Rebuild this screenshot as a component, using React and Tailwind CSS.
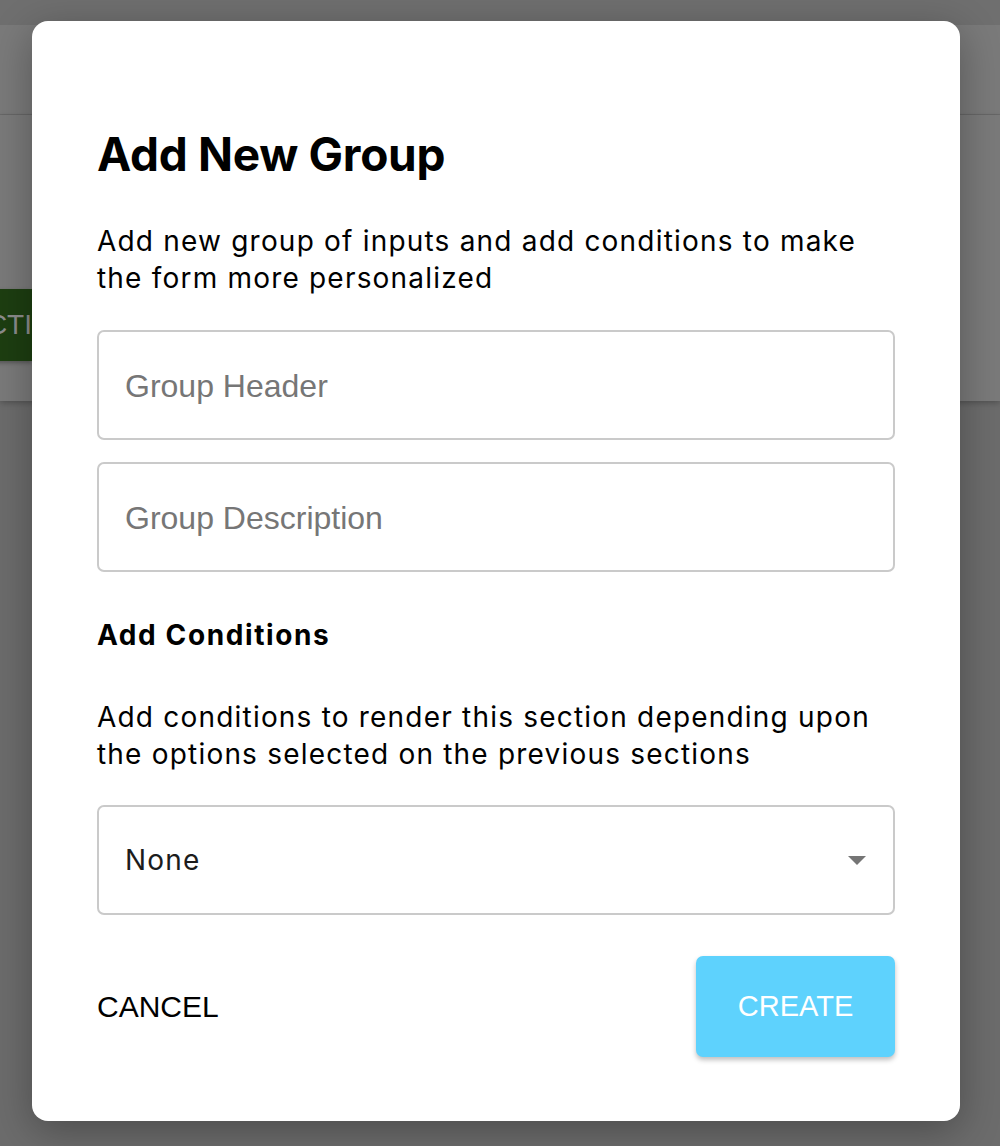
const FIELDS = ["Group Header", "Group Description"];

export default function App() {
  return (
    <div className="relative w-[1000px] h-[1146px] overflow-hidden bg-[#6c6c6c]">
      {/* page behind the dialog, already dimmed */}
      <div className="flex flex-col">
        <div className="h-[25px] bg-[#6f6f6f] shadow-[0_2px_4px_rgba(0,0,0,0.15)]" />
        <div className="h-[90px] bg-[#7a7a7a] border-b border-[#6c6c6c]" />
        <div className="h-[286px] bg-[#7a7a7a] shadow-[0_2px_6px_rgba(0,0,0,0.25)] flex flex-col justify-start pt-[174px]">
          <div className="w-[120px] h-[72px] -ml-[88px] bg-[#1d3e11] shadow-[0_2px_4px_rgba(0,0,0,0.3)] flex items-center justify-end pr-0">
            <span className="text-[28px] text-[#8c8c8c] font-['Liberation_Sans',sans-serif]">
              CTI
            </span>
          </div>
        </div>
      </div>

      {/* dialog */}
      <div className="absolute left-[32px] top-[21px] w-[928px] h-[1100px] bg-white rounded-[16px] shadow-[0_10px_40px_rgba(0,0,0,0.3)] px-[65px] pt-[105px] font-['Inter',sans-serif] text-black">
        <h1 className="text-[46px] leading-[56px] font-bold tracking-[-0.3px]">
          Add New Group
        </h1>
        <p className="mt-[41px] text-[28px] leading-[37px] tracking-[1.2px]">
          Add new group of inputs and add conditions to make the form more
          personalized
        </p>

        <div className="mt-[33px] flex flex-col gap-[22px]">
          {FIELDS.map((f) => (
            <input
              key={f}
              placeholder={f}
              className="w-full h-[110px] px-[26px] pt-[3px] rounded-[7px] border-2 border-[#cacaca] text-[32px] font-['Liberation_Sans',sans-serif] placeholder-[#767676] outline-none"
            />
          ))}
        </div>

        <h2 className="mt-[45px] text-[28px] leading-[37px] font-bold tracking-[1.6px]">
          Add Conditions
        </h2>
        <p className="mt-[45px] text-[28px] leading-[37px] tracking-[1.2px]">
          Add conditions to render this section depending upon the options
          selected on the previous sections
        </p>

        <div className="mt-[32px] h-[110px] rounded-[7px] border-2 border-[#cacaca] flex items-center justify-between pl-[26px] pr-[27px]">
          <span className="text-[28px] text-[#1c1c1c] tracking-[1.2px]">None</span>
          <svg width="18" height="9" viewBox="0 0 18 9">
            <path d="M0 0h18L9 9z" fill="#757575" />
          </svg>
        </div>

        <div className="mt-[41px] flex items-center justify-between">
          <button className="text-[30px] text-black font-['Liberation_Sans',sans-serif] leading-none">
            CANCEL
          </button>
          <button className="w-[199px] h-[101px] rounded-[7px] bg-[#5ed2fd] text-white text-[29px] font-['Liberation_Sans',sans-serif] shadow-[0_3px_5px_rgba(0,0,0,0.25)]">
            CREATE
          </button>
        </div>
      </div>
    </div>
  );
}
